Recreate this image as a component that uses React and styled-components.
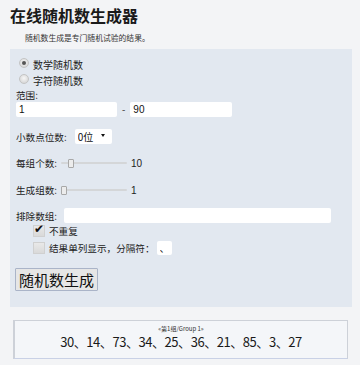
import React from "react";
import styled, { createGlobalStyle } from "styled-components";

const Global = createGlobalStyle`
  html, body { margin: 0; padding: 0; background: #f3f4f6; }
  body { font-family: "Noto Sans CJK SC", "Noto Sans", sans-serif; color: #222; }
  * { box-sizing: border-box; }
`;

const Page = styled.div`
  width: 360px;
  height: 365px;
  padding-top: 5px;
  overflow: hidden;
`;

const Title = styled.h1`
  margin: 0 0 0 10px;
  font-size: 16px;
  line-height: 20px;
  font-weight: 700;
  color: #1a1a1a;
`;

const Subtitle = styled.p`
  margin: 7px 0 0 25px;
  font-size: 7.8px;
  line-height: 11px;
  color: #333;
`;

const Panel = styled.div`
  margin: 6px 0 0 10px;
  width: 342px;
  background: #e2e8f0;
  padding: 8px 6px 16px 6px;
  display: flex;
  flex-direction: column;
  font-size: 10px;
`;

const Row = styled.div`
  display: flex;
  align-items: center;
  height: ${(p) => p.$h || 15}px;
  margin-top: ${(p) => p.$mt || 0}px;
  padding-left: ${(p) => p.$indent || 0}px;
`;

const Radio = styled.input.attrs({ type: "radio" })`
  appearance: none;
  margin: 0 4px 0 3px;
  width: 10px;
  height: 10px;
  border-radius: 50%;
  border: 1px solid #c4c4c4;
  background: radial-gradient(circle at 50% 40%, #f6f6f6, #cfcfcf);
  position: relative;
  top: -2px;
  &:checked::after {
    content: "";
    position: absolute;
    left: 2px;
    top: 2px;
    width: 4px;
    height: 4px;
    border-radius: 50%;
    background: #555;
  }
`;

const LabelText = styled.span`
  font-size: ${(p) => p.$fs || 9.6}px;
  line-height: 12px;
  color: #222;
  white-space: nowrap;
`;

const TextInput = styled.input.attrs({ type: "text" })`
  width: ${(p) => p.$w}px;
  height: 15px;
  border: none;
  border-radius: 2px;
  background: #fff;
  padding: 0 3px;
  margin: 0 0 0 ${(p) => p.$ml || 0}px;
  font-family: "Liberation Sans", Arial, sans-serif;
  font-size: 10px;
  color: #111;
  outline: none;
`;

const Dash = styled.span`
  font-family: "Liberation Sans", Arial, sans-serif;
  font-size: 10px;
  color: #555;
  margin: 0 5px 0 5px;
`;

const SelectWrap = styled.span`
  position: relative;
  display: inline-block;
  margin-left: 8px;
`;

const Select = styled.select`
  appearance: none;
  width: 37px;
  height: 15px;
  border: none;
  border-radius: 2px;
  background: #fff;
  padding: 0 0 0 3px;
  font-family: "Noto Sans CJK SC", sans-serif;
  font-size: 10px;
  line-height: 15px;
  color: #111;
  outline: none;
`;

const Arrow = styled.span`
  position: absolute;
  right: 7px;
  top: 5px;
  width: 0;
  height: 0;
  border-left: 2px solid transparent;
  border-right: 2px solid transparent;
  border-top: 3px solid #111;
  pointer-events: none;
`;

const Slider = styled.input.attrs({ type: "range" })`
  appearance: none;
  width: 66px;
  height: 10px;
  margin: 0 4px 0 ${(p) => p.$ml || 0}px;
  background: transparent;
  &::-webkit-slider-runnable-track {
    height: 2px;
    background: #d4d6d8;
    border-radius: 1px;
  }
  &::-webkit-slider-thumb {
    appearance: none;
    width: 6px;
    height: 9px;
    margin-top: -3.5px;
    background: #ececec;
    border: 1px solid #a8a8a8;
    border-radius: 1px;
  }
`;

const Value = styled.span`
  font-family: "Liberation Sans", Arial, sans-serif;
  font-size: 10px;
  color: #222;
`;

const Check = styled.input.attrs({ type: "checkbox" })`
  appearance: none;
  margin: 0 4px 0 0;
  width: 12px;
  height: 12px;
  border: 1px solid #d0d0d0;
  background: linear-gradient(#e9e9e9, #d9d9d9);
  position: relative;
  &:checked::after {
    content: "✔";
    position: absolute;
    left: 0px;
    top: -4px;
    font-size: 12px;
    line-height: 14px;
    color: #111;
    font-family: "DejaVu Sans", sans-serif;
  }
`;

const SepInput = styled(TextInput)`
  font-family: "Noto Sans CJK SC", sans-serif;
  height: 14px;
  padding: 0 3px;
`;

const Button = styled.button`
  align-self: flex-start;
  margin-top: 12px;
  margin-left: -1px;
  height: 23px;
  padding: 0 3px;
  font-family: "Noto Sans CJK SC", sans-serif;
  font-size: 15px;
  line-height: 20px;
  color: #111;
  background: #e6e6e6;
  border: 1px solid #aab4c8;
  border-radius: 1px;
`;

const ResultBox = styled.div`
  margin: 13px 0 0 13px;
  width: 335px;
  height: 39px;
  background: #f4f6f9;
  border: 1px solid #cdd1d8;
  border-bottom-color: #c9d1e6;
  border-left: 2px solid #cdd1d8;
  display: flex;
  flex-direction: column;
  align-items: center;
  padding-top: 4px;
`;

const GroupLabel = styled.div`
  font-size: 6px;
  line-height: 8px;
  color: #333;
`;

const Numbers = styled.div`
  font-size: 13px;
  line-height: 16px;
  letter-spacing: -0.45px;
  color: #1a1a1a;
  margin-top: 1px;
`;

export default function App() {
  const nums = [30, 14, 73, 34, 25, 36, 21, 85, 3, 27];
  return (
    <Page>
      <Global />
      <Title>在线随机数生成器</Title>
      <Subtitle>随机数生成是专门随机试验的结果。</Subtitle>
      <Panel>
        <Row $h={16}>
          <Radio name="t" defaultChecked />
          <LabelText $fs={10}>数学随机数</LabelText>
        </Row>
        <Row $h={16}>
          <Radio name="t" />
          <LabelText $fs={10}>字符随机数</LabelText>
        </Row>
        <Row $h={12}>
          <LabelText>范围:</LabelText>
        </Row>
        <Row $mt={1}>
          <TextInput $w={101} defaultValue="1" />
          <Dash>-</Dash>
          <TextInput $w={102} defaultValue="90" />
        </Row>
        <Row $mt={12}>
          <LabelText>小数点位数:</LabelText>
          <SelectWrap>
            <Select defaultValue="0">
              <option value="0">0位</option>
              <option value="1">1位</option>
              <option value="2">2位</option>
            </Select>
            <Arrow />
          </SelectWrap>
        </Row>
        <Row $h={14} $mt={12}>
          <LabelText>每组个数:</LabelText>
          <Slider $ml={4} min={1} max={80} defaultValue={10} />
          <Value>10</Value>
        </Row>
        <Row $h={14} $mt={13}>
          <LabelText>生成组数:</LabelText>
          <Slider $ml={4} min={1} max={80} defaultValue={1} />
          <Value>1</Value>
        </Row>
        <Row $mt={11}>
          <LabelText>排除数组:</LabelText>
          <TextInput $w={267} $ml={7} />
        </Row>
        <Row $indent={17} $h={16}>
          <Check defaultChecked />
          <LabelText>不重复</LabelText>
        </Row>
        <Row $indent={17} $h={17}>
          <Check />
          <LabelText>结果单列显示，分隔符：</LabelText>
          <SepInput $w={15} $ml={2} defaultValue="、" />
        </Row>
        <Button>随机数生成</Button>
      </Panel>
      <ResultBox>
        <GroupLabel>«第1组/Group 1»</GroupLabel>
        <Numbers>{nums.join("、")}</Numbers>
      </ResultBox>
    </Page>
  );
}
